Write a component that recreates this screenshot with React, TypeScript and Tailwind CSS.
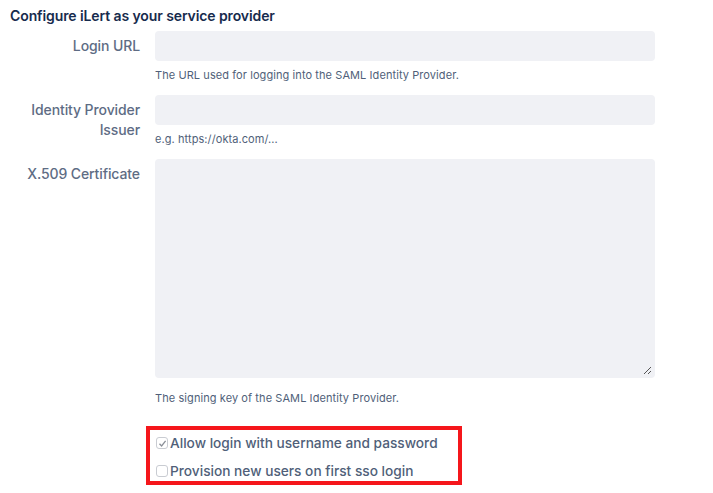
import React from 'react';

const font = { fontFamily: 'Inter, "Liberation Sans", sans-serif' };

const Field: React.FC<{ label: React.ReactNode; help: string; tall?: boolean }> = ({ label, help, tall }) => (
  <div className="flex gap-[15px]">
    <div className="w-[140px] shrink-0 text-right text-[14px] leading-[20px] font-medium text-[#5e6c84] pt-[5px] tracking-[-0.1px]">
      {label}
    </div>
    <div className="w-[500px]">
      <div className={`rounded-[4px] bg-[#f0f1f5] relative ${tall ? 'h-[219px]' : 'h-[30px]'}`}>
        {tall && (
          <svg className="absolute right-[3px] bottom-[3px]" width="9" height="9" viewBox="0 0 9 9">
            <path d="M8 1 L1 8 M8 5 L5 8" stroke="#555" strokeWidth="1" />
          </svg>
        )}
      </div>
      <div className={`text-[11px] leading-[14px] text-[#505f79] tracking-[0.08px] ${tall ? 'mt-[13px]' : 'mt-[7px]'}`}>{help}</div>
    </div>
  </div>
);

const Check: React.FC<{ checked?: boolean; label: string }> = ({ checked, label }) => (
  <div className="flex items-center h-[20px]">
    <span className="w-[12px] h-[12px] rounded-[3px] border border-[#c9ccd2] bg-white flex items-center justify-center mr-[2px]">
      {checked && (
        <svg width="9" height="9" viewBox="0 0 9 9">
          <path d="M1.5 4.8 L3.6 7 L7.6 1.8" stroke="#8a8f98" strokeWidth="1.3" fill="none" />
        </svg>
      )}
    </span>
    <span className="text-[13.7px] font-medium text-[#505f79]">{label}</span>
  </div>
);

export default function App() {
  return (
    <div className="w-[713px] h-[493px] bg-white" style={font}>
      <div className="pt-[7px] pl-[10px] text-[14px] leading-[18px] font-semibold text-[#172b4d] tracking-[-0.1px]">
        Configure iLert as your service provider
      </div>
      <div className="mt-[6px] flex flex-col gap-[13px]">
        <Field label="Login URL" help="The URL used for logging into the SAML Identity Provider." />
        <Field label={<>Identity Provider<br />Issuer</>} help="e.g. https://okta.com/..." />
        <Field label="X.509 Certificate" help="The signing key of the SAML Identity Provider." tall />
      </div>
      <div className="mt-[21px] ml-[146px] w-[316px] border-[4px] border-[#f5161b] pl-[6px] pt-[3px] flex flex-col gap-[8px]">
        <Check checked label="Allow login with username and password" />
        <Check label="Provision new users on first sso login" />
      </div>
    </div>
  );
}
